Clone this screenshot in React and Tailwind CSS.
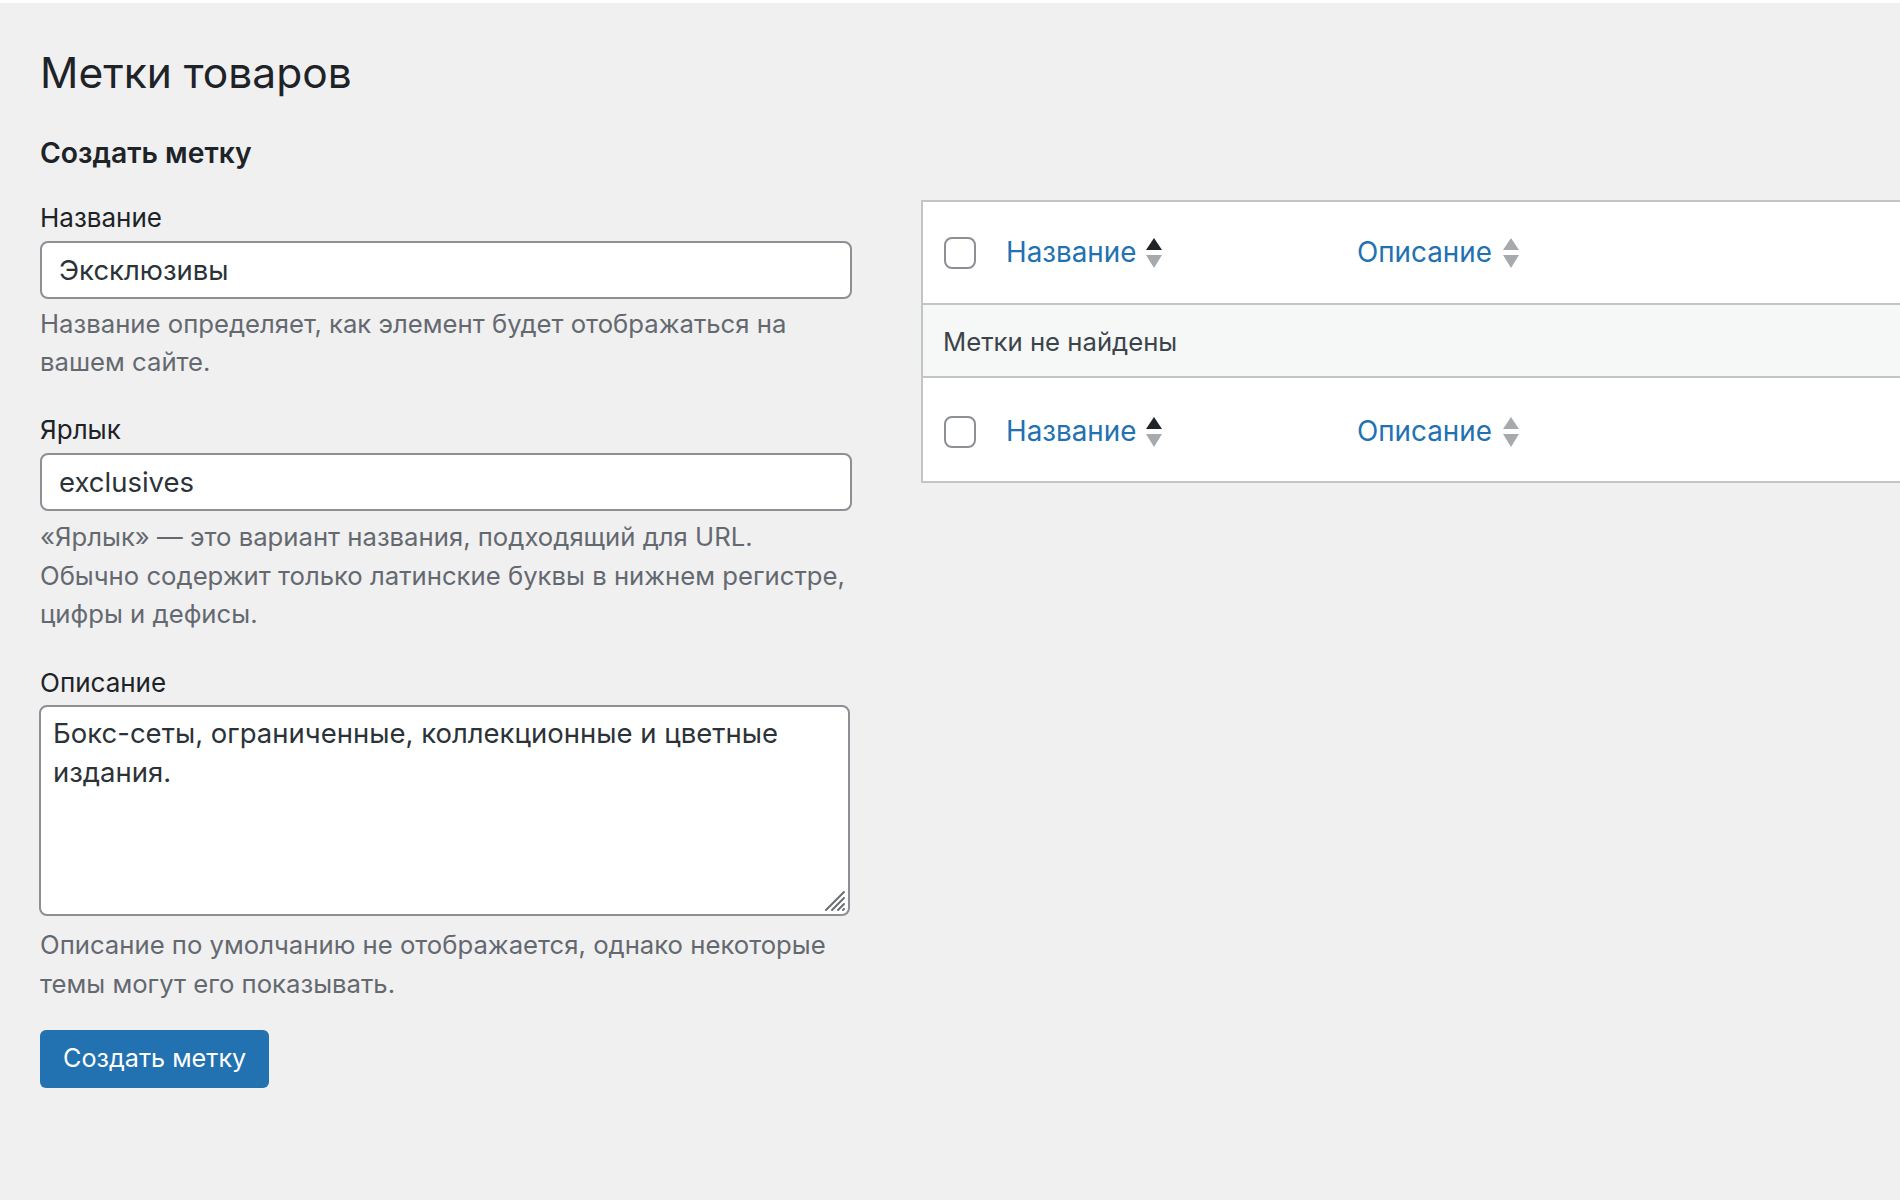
import React from "react";

const font = { fontFamily: "Inter, 'Noto Sans', sans-serif" };

function SortArrows({ active }) {
  return (
    <svg width="16" height="30" viewBox="0 0 16 30" className="shrink-0">
      <path d="M8 0 L16 12 L0 12 Z" fill={active ? "#1d2327" : "#a7aaad"} />
      <path d="M0 17 L16 17 L8 30 Z" fill="#a7aaad" />
    </svg>
  );
}

function HeadRow({ last }) {
  return (
    <div
      className={
        "flex items-center h-[103px] bg-white " +
        (last ? "pt-[4px]" : "pt-[1px] border-b-2 border-[#c3c4c7]")
      }
    >
      <input
        type="checkbox"
        className="appearance-none ml-[21px] w-8 h-8 rounded-[8px] border-2 border-[#8c8f94] bg-white shrink-0"
      />
      <div className="ml-[30px] w-[351px] flex items-center">
        <a className="text-[27.8px] text-[#2271b1]">Название</a>
        <span className="ml-[10px]">
          <SortArrows active />
        </span>
      </div>
      <div className="flex items-center">
        <a className="text-[27.8px] text-[#2271b1]">Описание</a>
        <span className="ml-[11px]">
          <SortArrows />
        </span>
      </div>
    </div>
  );
}

export default function App() {
  return (
    <div className="w-full h-[1200px] overflow-hidden bg-[#f0f0f1]" style={font}>
      <div className="h-[3px] bg-white" />
      <div className="w-[2560px] pl-[40px] flex">
        <div className="w-[881px] shrink-0">
          <h1 className="mt-[40px] text-[42.5px] leading-[60px] font-normal text-[#1d2327]">
            Метки товаров
          </h1>
          <h2 className="mt-[32px] text-[28.3px] leading-[36px] font-semibold text-[#1d2327]">
            Создать метку
          </h2>

          <div className="mt-[31px] w-[814px]">
            <label className="block text-[26px] leading-[32px] text-[#1d2327]">Название</label>
            <input
              type="text"
              defaultValue="Эксклюзивы"
              className="mt-[7px] block w-[812px] h-[58px] px-[17px] rounded-[8px] border-2 border-[#8c8f94] bg-white text-[27.5px] text-[#2c3338] outline-none"
            />
            <p className="mt-[6px] text-[25.7px] leading-[38px] text-[#646970]">
              Название определяет, как элемент будет отображаться на вашем сайте.
            </p>

            <label className="block mt-[33px] text-[26px] leading-[32px] text-[#1d2327]">Ярлык</label>
            <input
              type="text"
              defaultValue="exclusives"
              className="mt-[7px] block w-[812px] h-[58px] px-[17px] rounded-[8px] border-2 border-[#8c8f94] bg-white text-[27.5px] text-[#2c3338] outline-none"
            />
            <p className="mt-[7px] text-[25.7px] leading-[38.5px] text-[#646970]">
              «Ярлык» — это вариант названия, подходящий для URL. Обычно содержит только латинские буквы в нижнем регистре, цифры и дефисы.
            </p>

            <label className="block mt-[33px] text-[26px] leading-[32px] text-[#1d2327]">Описание</label>
            <div className="relative mt-[6px] w-[811px] -ml-[1px]">
              <textarea
                defaultValue="Бокс-сеты, ограниченные, коллекционные и цветные издания."
                className="block w-full h-[211px] px-[12px] py-[7px] rounded-[8px] border-2 border-[#8c8f94] bg-white text-[27.5px] leading-[39px] text-[#2c3338] resize-none outline-none"
              />
              <svg
                width="22"
                height="22"
                viewBox="0 0 22 22"
                className="absolute right-[4px] bottom-[4px]"
              >
                <path
                  d="M2 20 L20 2 M8 20 L20 8 M14 20 L20 14 M19 20 L20 19"
                  stroke="#6b6e72"
                  strokeWidth="2"
                  strokeLinecap="round"
                />
              </svg>
            </div>
            <p className="mt-[9px] text-[25.7px] leading-[39px] text-[#646970]">
              Описание по умолчанию не отображается, однако некоторые темы могут его показывать.
            </p>

            <button className="mt-[27px] h-[58px] px-[23px] rounded-[6px] bg-[#2271b1] text-white text-[25.2px]">
              Создать метку
            </button>
          </div>
        </div>

        <div className="mt-[197px] w-[1600px] shrink-0">
          <div className="border-2 border-[#c3c4c7] bg-white">
            <HeadRow />
            <div className="h-[73px] flex items-center pl-[20px] pt-[4px] bg-[#f6f7f7] border-b-2 border-[#c3c4c7] text-[25.7px] text-[#3c434a]">
              Метки не найдены
            </div>
            <HeadRow last />
          </div>
        </div>
      </div>
    </div>
  );
}
